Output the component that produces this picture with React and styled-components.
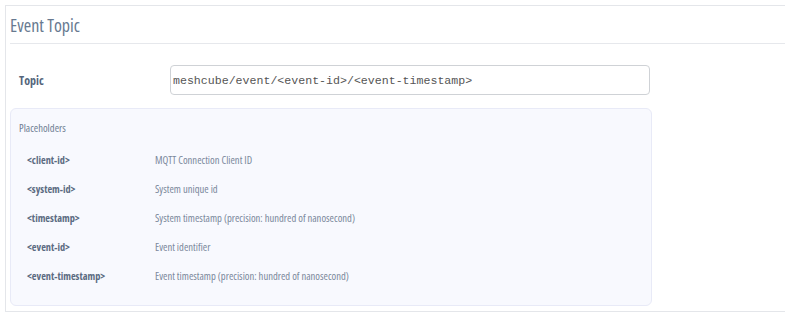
import React from "react";
import styled, { createGlobalStyle } from "styled-components";

const GlobalStyle = createGlobalStyle`
	html, body {
		margin: 0;
		padding: 0;
		background: #ffffff;
	}
	body {
		font-family: "Open Sans", "Liberation Sans", sans-serif;
		font-stretch: 75%;
		overflow: hidden;
	}
`;

const Card = styled.section`
	margin: 5px 0 0 5px;
	height: 307px;
	box-sizing: border-box;
	border: 1px solid #e4e6ea;
	border-right: none;
	background: #ffffff;
`;

const CardHeader = styled.header`
	margin-left: 4px;
	height: 37px;
	display: flex;
	align-items: center;
	border-bottom: 1px solid #e6e8ec;
`;

const Title = styled.h2`
	margin: 0;
	font-size: 18px;
	font-weight: normal;
	color: #677990;
`;

const CardBody = styled.div`
	padding: 21px 0 0 4px;
	width: 642px;
`;

const FieldRow = styled.div`
	display: grid;
	grid-template-columns: 151px 480px;
	align-items: center;
	padding-left: 9px;
	margin-bottom: 13px;
`;

const FieldLabel = styled.label`
	font-size: 12px;
	font-weight: bold;
	color: #55657b;
`;

const TextInput = styled.input`
	height: 30px;
	box-sizing: border-box;
	border: 1px solid #cfd2d6;
	border-radius: 4px;
	padding: 0 2px;
	font-family: "Liberation Mono", "Courier New", monospace;
	font-stretch: normal;
	font-size: 11.6px;
	color: #555;
	background: #fff;
	outline: none;
`;

const PlaceholderBox = styled.div`
	height: 198px;
	box-sizing: border-box;
	border: 1px solid #e8eaf7;
	border-radius: 6px;
	background: #f8f9fe;
	padding: 11px 8px 0;
`;

const BoxCaption = styled.div`
	font-size: 10.6px;
	line-height: 16px;
	color: #6f7e92;
	margin-bottom: 9px;
`;

const PlaceholderList = styled.dl`
	margin: 0;
	padding-left: 8px;
	display: grid;
	grid-template-columns: 128px 1fr;
	grid-auto-rows: 29px;
	align-items: center;
`;

const Key = styled.dt`
	font-size: 10.3px;
	font-weight: bold;
	color: #5b6b81;
`;

const Description = styled.dd`
	margin: 0;
	font-size: 10.6px;
	color: #7a889b;
`;

const placeholders = [
	["<client-id>", "MQTT Connection Client ID"],
	["<system-id>", "System unique id"],
	["<timestamp>", "System timestamp (precision: hundred of nanosecond)"],
	["<event-id>", "Event identifier"],
	["<event-timestamp>", "Event timestamp (precision: hundred of nanosecond)"],
];

function App() {
	return (
		<>
			<GlobalStyle />
			<Card>
				<CardHeader>
					<Title>Event Topic</Title>
				</CardHeader>
				<CardBody>
					<FieldRow>
						<FieldLabel htmlFor="topic">Topic</FieldLabel>
						<TextInput
							id="topic"
							defaultValue="meshcube/event/<event-id>/<event-timestamp>"
						/>
					</FieldRow>
					<PlaceholderBox>
						<BoxCaption>Placeholders</BoxCaption>
						<PlaceholderList>
							{placeholders.map(([key, text]) => (
								<React.Fragment key={key}>
									<Key>{key}</Key>
									<Description>{text}</Description>
								</React.Fragment>
							))}
						</PlaceholderList>
					</PlaceholderBox>
				</CardBody>
			</Card>
		</>
	);
}

export default App;
